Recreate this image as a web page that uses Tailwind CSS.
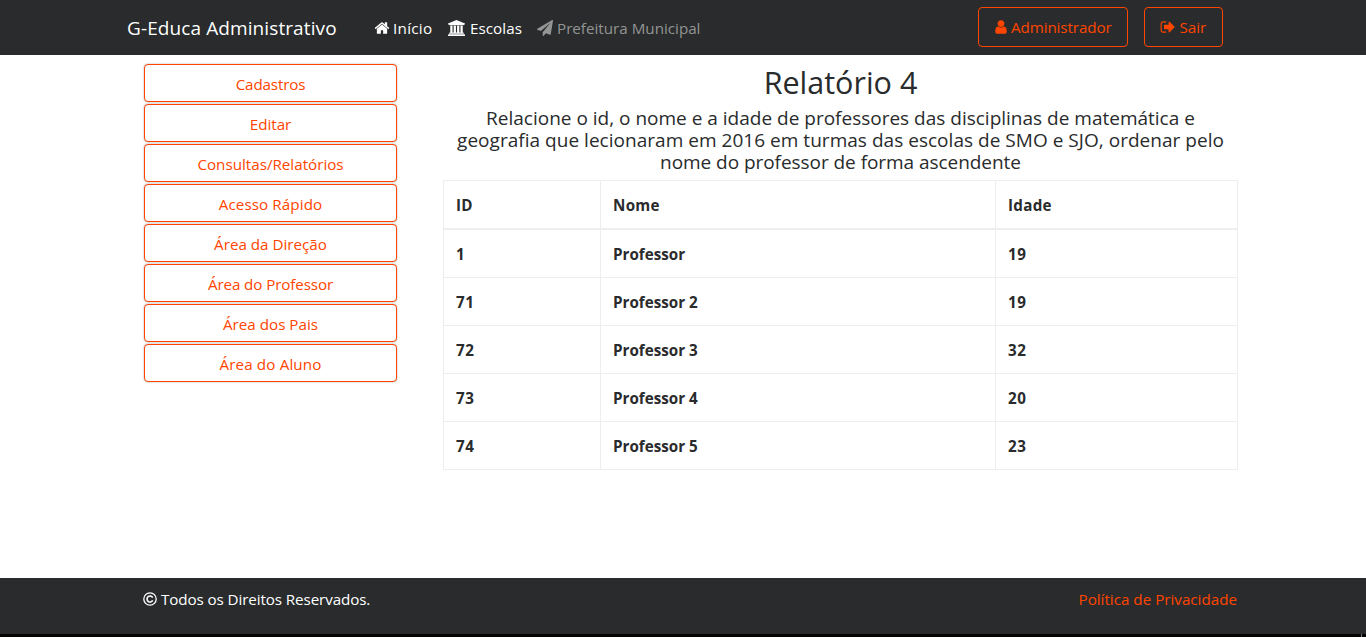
<!DOCTYPE html>
<html lang="pt-BR">
<head>
<meta charset="utf-8">
<title>G-Educa Administrativo</title>
<script src="https://cdn.jsdelivr.net/npm/@tailwindcss/browser@4"></script>
</head>
<body class="flex h-[637px] flex-col overflow-hidden bg-white font-['Open_Sans',sans-serif] text-[15.2px] leading-6 whitespace-nowrap text-[#292b2c]">
<nav class="flex h-[55px] shrink-0 bg-[#292b2c] pl-[127px] text-white">
  <a class="mt-[13px] w-[247px] text-[19px] leading-[30px] tracking-[0.1px]">G-Educa Administrativo</a>
  <a class="mt-4 flex w-[73px]">
    <svg class="mt-1 mr-[3px] size-4" viewBox="0 0 1792 1792" fill="currentColor"><path d="M1472 992v480q0 26-19 45t-45 19h-384v-384h-256v384h-384q-26 0-45-19t-19-45v-480q0-1 .5-3t.5-3l575-474 575 474q1 2 1 6zm223-69l-62 74q-8 9-21 11h-3q-13 0-21-7l-692-577-692 577q-12 8-24 7-13-2-21-11l-62-74q-8-10-7-23.5t11-21.5l719-599q32-26 76-26t76 26l244 204v-195q0-14 9-23t23-9h192q14 0 23 9t9 23v408l219 182q10 8 11 21.5t-7 23.5z"/></svg>
    <span class="tracking-[0.3px]">Início</span>
  </a>
  <a class="mt-4 flex w-[90px]">
    <svg class="mt-1 mr-[5px] ml-px h-4 w-[17px]" viewBox="0 0 1920 1792" fill="currentColor"><path d="M960 0l960 384v128h-128q0 26-20.500 45t-48.500 19h-1526q-28 0-48.500-19t-20.500-45h-128v-128zm-704 640h256v768h128v-768h256v768h128v-768h256v768h128v-768h256v768h59q28 0 48.500 19t20.500 45v64h-1664v-64q0-26 20.500-45t48.500-19h59v-768zm1595 960q28 0 48.500 19t20.500 45v128h-1920v-128q0-26 20.500-45t48.500-19h1782z"/></svg>
    <span class="tracking-[0.05px]">Escolas</span>
  </a>
  <a class="mt-4 flex text-[#949595]">
    <svg class="mt-1 mr-1 size-4" viewBox="0 0 1792 1792" fill="currentColor"><path d="M1764 11q33 24 27 64l-256 1536q-5 29-32 45-14 8-31 8-11 0-24-5l-453-185-242 295q-18 23-49 23-13 0-22-4-19-7-30.500-23.500t-11.500-36.500v-349l864-1059-1069 925-395-162q-37-14-40-55-2-40 32-59l1664-960q15-9 32-9 20 0 36 11z"/></svg>
    <span>Prefeitura Municipal</span>
  </a>
  <div class="mt-[7px] mr-[143px] ml-auto flex gap-4 text-[#ff4500]">
    <a class="flex h-10 w-[150px] rounded border border-[#ff4500] pt-[7px] pl-[14px]">
      <svg class="mt-[4px] mr-[2px] size-4" viewBox="0 0 1792 1792" fill="currentColor"><path d="M1536 1399q0 109-62.500 187t-150.500 78h-854q-88 0-150.500-78t-62.500-187q0-85 8.500-160.500t31.500-152 58.500-131 94-89 134.500-34.500q131 128 313 128t313-128q76 0 134.500 34.500t94 89 58.500 131 31.500 152 8.500 160.500zm-256-887q0 159-112.500 271.500t-271.500 112.500-271.500-112.500-112.500-271.500 112.500-271.500 271.500-112.500 271.500 112.500 112.500 271.500z"/></svg>
      <span class="tracking-[-0.1px]">Administrador</span>
    </a>
    <a class="flex h-10 w-[79px] rounded border border-[#ff4500] pt-[7px] pl-[15px]">
      <svg class="mt-[4px] mr-[3.500px] size-4" viewBox="0 0 1792 1792" fill="currentColor"><path d="M704 1440q0 4 1 20t.5 26.500-3 23.500-10 19.500-20.500 6.500h-320q-119 0-203.500-84.500t-84.500-203.500v-704q0-119 84.500-203.500t203.500-84.500h320q13 0 22.500 9.500t9.500 22.500q0 4 1 20t.5 26.500-3 23.500-10 19.500-20.500 6.500h-320q-66 0-113 47t-47 113v704q0 66 47 113t113 47h312l11.500 1 11.500 3 8 5.500 7 9 2 13.500zm928-544q0 26-19 45l-544 544q-19 19-45 19t-45-19-19-45v-288h-448q-26 0-45-19t-19-45v-384q0-26 19-45t45-19h448v-288q0-26 19-45t45-19 45 19l544 544q19 19 19 45z"/></svg>
      <span>Sair</span>
    </a>
  </div>
</nav>

<main class="flex grow items-start pl-36">
  <div class="mt-[9px] flex w-[253px] shrink-0 flex-col gap-0.5 text-center text-[#ff4500] *:h-[38px] *:rounded *:border *:border-[#ff4500] *:bg-white *:pt-[7px] *:shadow-[0_0_2px_rgba(0,0,0,0.35)]">
    <a class="tracking-[-0.15px]">Cadastros</a>
    <a>Editar</a>
    <a>Consultas/Relatórios</a>
    <a class="tracking-[0.1px]">Acesso Rápido</a>
    <a>Área da Direção</a>
    <a class="tracking-[-0.12px]">Área do Professor</a>
    <a>Área dos Pais</a>
    <a class="tracking-[0.14px]">Área do Aluno</a>
  </div>
  <section class="mt-[9px] ml-[46px] w-[795px] text-center">
    <h2 class="mb-[7px] text-[30.5px] leading-[36px]">Relatório 4</h2>
    <h5 class="mb-[7px] text-[19px] leading-[22px]">
      Relacione o id, o nome e a idade de professores das disciplinas de matemática e<br>
      <span class="tracking-[0.03px]">geografia que lecionaram em 2016 em turmas das escolas de SMO e SJO, ordenar pelo</span><br>
      <span class="tracking-[-0.05px]">nome do professor de forma ascendente</span>
    </h5>
    <div class="border-t border-l border-[#eceeef] text-left font-bold">
      <div class="grid h-[49px] grid-cols-[157px_395px_242px] border-b-2 border-[#eceeef] tracking-[0.3px] *:border-r *:border-[#eceeef] *:px-3 *:pt-3">
        <div>ID</div><div>Nome</div><div>Idade</div>
      </div>
      <div class="*:grid *:h-12 *:grid-cols-[157px_395px_242px] *:border-b *:border-[#eceeef] *:*:border-r *:*:border-[#eceeef] *:*:px-3 *:*:pt-3">
        <div><div>1</div><div>Professor</div><div class="tracking-[0.5px]">19</div></div>
        <div><div class="tracking-[0.5px]">71</div><div>Professor 2</div><div class="tracking-[0.5px]">19</div></div>
        <div><div class="tracking-[0.5px]">72</div><div>Professor 3</div><div class="tracking-[0.5px]">32</div></div>
        <div><div class="tracking-[0.5px]">73</div><div>Professor 4</div><div class="tracking-[0.5px]">20</div></div>
        <div><div class="tracking-[0.5px]">74</div><div>Professor 5</div><div class="tracking-[0.5px]">23</div></div>
      </div>
    </div>
  </section>
</main>

<footer class="flex h-14 shrink-0 bg-[#292b2c] pt-[9px] pr-[129px] pl-[143px] text-white">
  <svg class="mt-[5px] mr-1 size-[14px]" viewBox="0 0 14 14" fill="none" stroke="currentColor" stroke-width="1.300"><circle cx="7" cy="7" r="6.200"/><path stroke-width="1.600" d="M9.700 5.600A3 3 0 1 0 9.700 8.400"/></svg>
  <span class="tracking-[-0.1px]">Todos os Direitos Reservados.</span>
  <a class="ml-auto text-[#ff4500]">Política de Privacidade</a>
</footer>
<div class="flex h-[3px] shrink-0 justify-end bg-[#050604] pr-1"><div class="w-px bg-[#777]"></div></div>
</body>
</html>
